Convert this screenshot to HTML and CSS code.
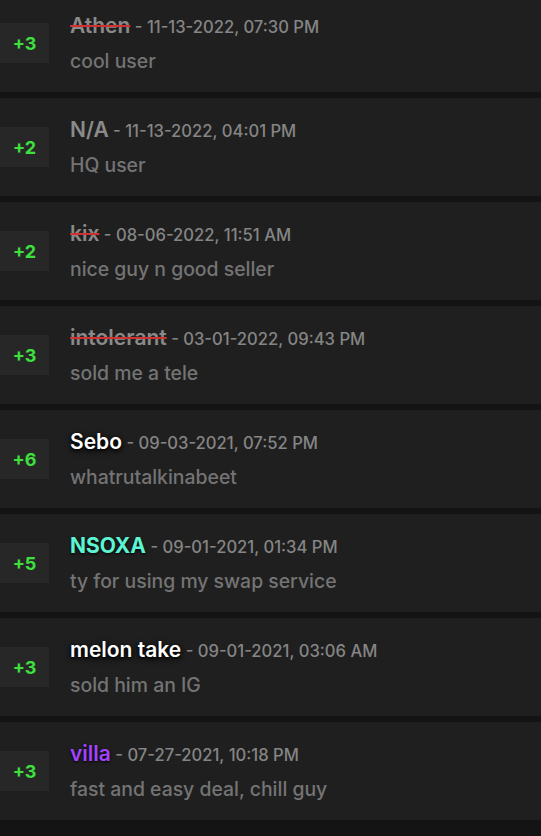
FILE: index.html
```html
<!DOCTYPE html>
<html>
<head>
<meta charset="utf-8">
<link rel="stylesheet" href="styles.css">
</head>
<body>
<div class="list">
  <div class="row">
    <div class="rep">+3</div>
    <div class="info">
      <div class="head"><span class="name struck">Athen</span><span class="date"> - 11-13-2022, 07:30 PM</span></div>
      <div class="comment">cool user</div>
    </div>
  </div>
  <div class="row">
    <div class="rep">+2</div>
    <div class="info">
      <div class="head"><span class="name gray">N/A</span><span class="date"> - 11-13-2022, 04:01 PM</span></div>
      <div class="comment">HQ user</div>
    </div>
  </div>
  <div class="row">
    <div class="rep">+2</div>
    <div class="info">
      <div class="head"><span class="name struck">kix</span><span class="date"> - 08-06-2022, 11:51 AM</span></div>
      <div class="comment">nice guy n good seller</div>
    </div>
  </div>
  <div class="row">
    <div class="rep">+3</div>
    <div class="info">
      <div class="head"><span class="name struck">intolerant</span><span class="date"> - 03-01-2022, 09:43 PM</span></div>
      <div class="comment">sold me a tele</div>
    </div>
  </div>
  <div class="row">
    <div class="rep">+6</div>
    <div class="info">
      <div class="head"><span class="name glow">Sebo</span><span class="date"> - 09-03-2021, 07:52 PM</span></div>
      <div class="comment">whatrutalkinabeet</div>
    </div>
  </div>
  <div class="row">
    <div class="rep">+5</div>
    <div class="info">
      <div class="head"><span class="name aqua">NSOXA</span><span class="date"> - 09-01-2021, 01:34 PM</span></div>
      <div class="comment">ty for using my swap service</div>
    </div>
  </div>
  <div class="row">
    <div class="rep">+3</div>
    <div class="info">
      <div class="head"><span class="name glow">melon take</span><span class="date"> - 09-01-2021, 03:06 AM</span></div>
      <div class="comment">sold him an IG</div>
    </div>
  </div>
  <div class="row">
    <div class="rep">+3</div>
    <div class="info">
      <div class="head"><span class="name purple">villa</span><span class="date"> - 07-27-2021, 10:18 PM</span></div>
      <div class="comment">fast and easy deal, chill guy</div>
    </div>
  </div>
</div>
</body>
</html>
```
FILE: styles.css
```css
html, body {
  margin: 0;
  padding: 0;
  background: #141414;
  overflow: hidden;
}
body {
  font-family: Inter, "Noto Sans", sans-serif;
}
.list {
  display: flex;
  flex-direction: column;
  gap: 6px;
  margin-top: -6px;
}
.row {
  height: 98px;
  background: #1f1f1f;
  display: flex;
  align-items: center;
  gap: 22px;
}
.rep {
  width: 49px;
  height: 40px;
  background: #272727;
  color: #3ee03e;
  font-weight: 700;
  font-size: 18px;
  display: flex;
  align-items: center;
  justify-content: center;
}
.info {
  display: flex;
  flex-direction: column;
  gap: 10px;
  margin-top: 1px;
  margin-left: -1px;
}
.head {
  line-height: 24px;
  white-space: nowrap;
}
.name {
  font-size: 21px;
  font-weight: 600;
  color: #8a8a8a;
}
.struck {
  text-decoration: line-through;
  text-decoration-color: #d03030;
  text-decoration-thickness: 2px;
}
.glow {
  color: #ffffff;
  text-shadow: 0 1px 3px #000, 0 2px 6px #000;
}
.aqua {
  color: #5cf5d3;
  font-weight: 700;
  text-shadow: 0 1px 3px #000;
}
.purple {
  color: #a442ff;
  text-shadow: 0 1px 3px #000;
}
.date {
  font-size: 16.6px;
  font-weight: 500;
  color: #858585;
}
.comment {
  font-size: 19.4px;
  font-weight: 500;
  color: #747474;
  line-height: 24px;
}
```
